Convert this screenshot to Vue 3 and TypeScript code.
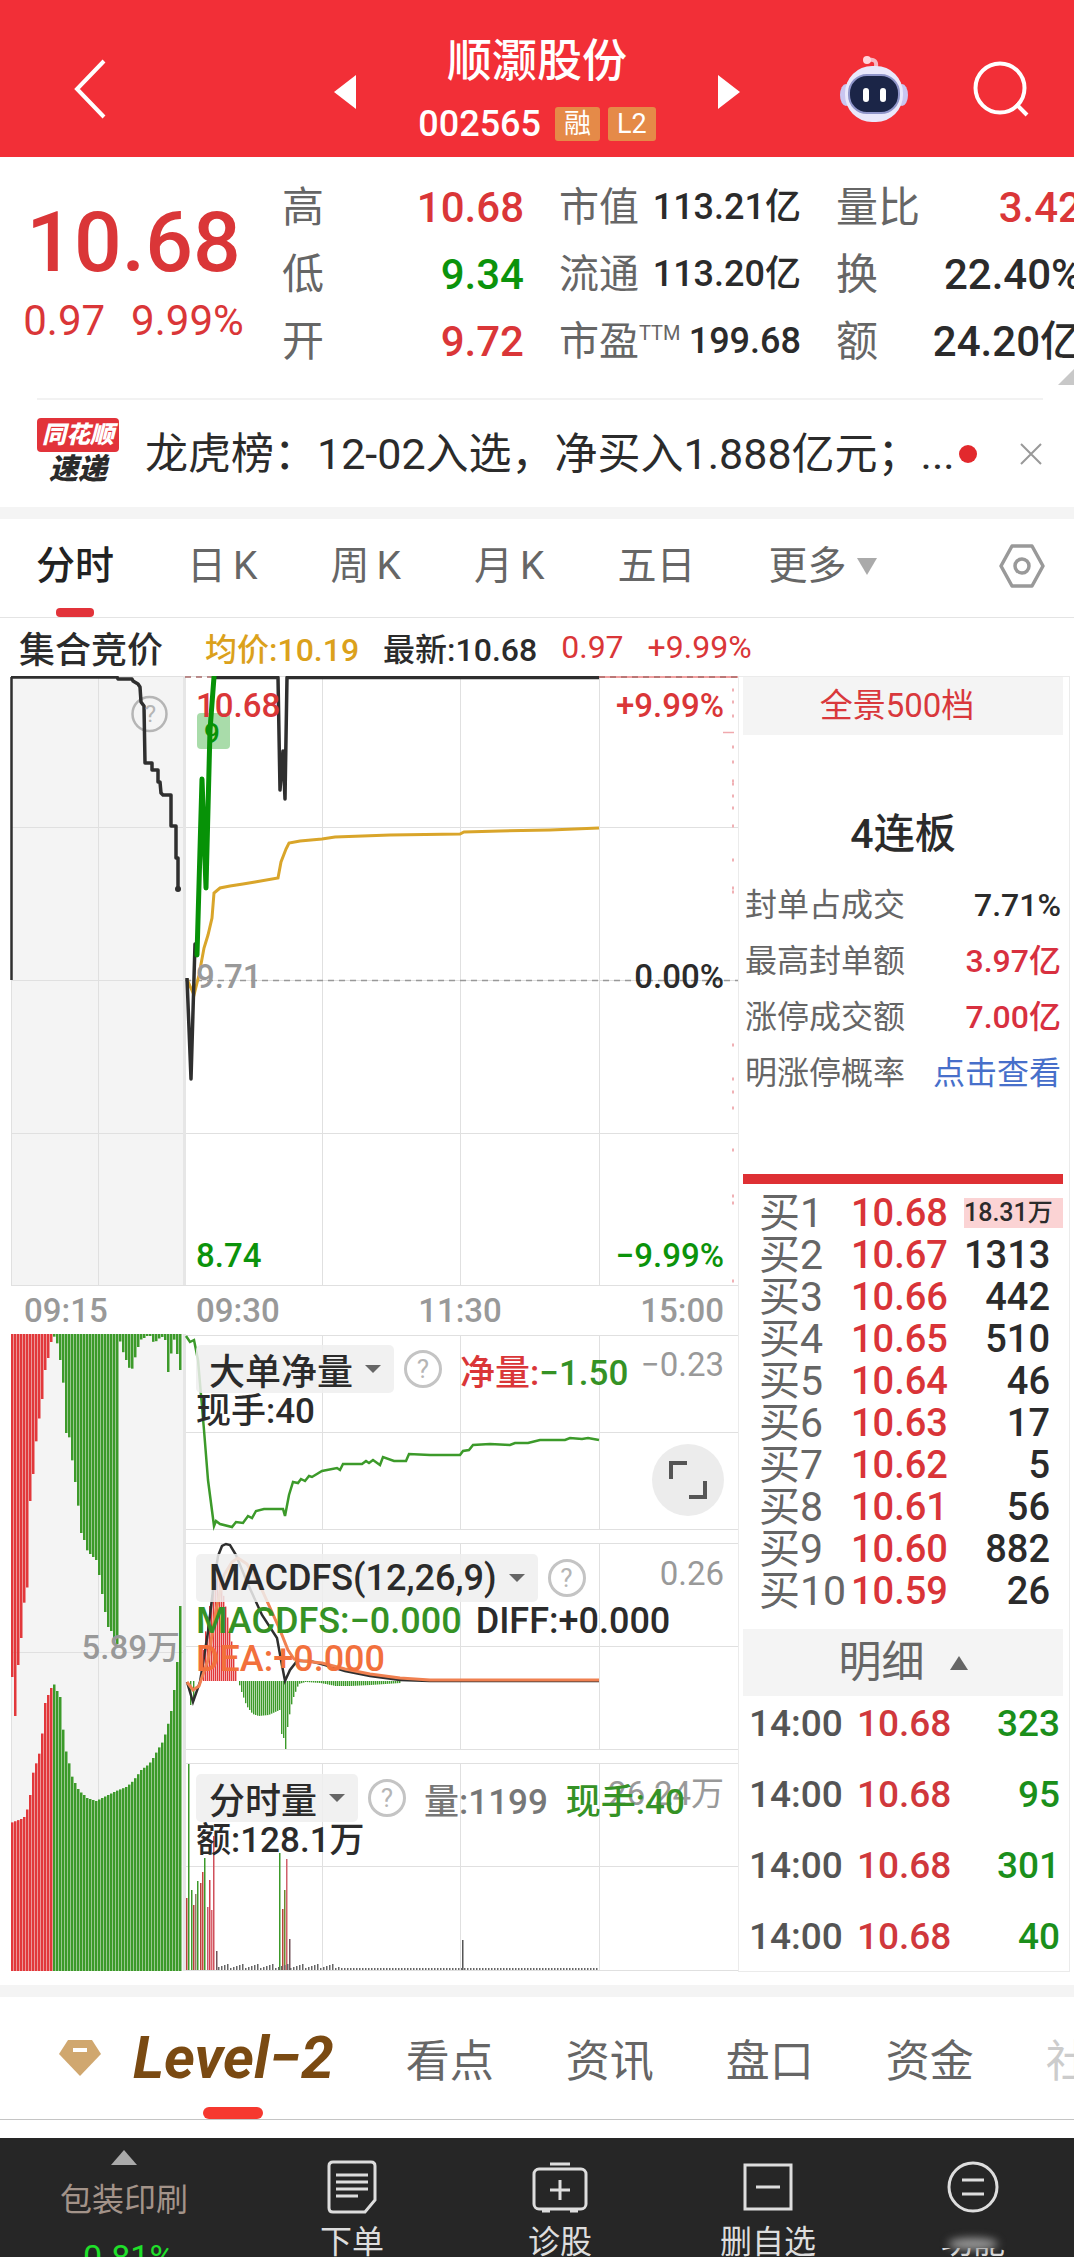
<script setup lang="ts">
import { ref } from 'vue'

type Pt = [number, number]
interface Bar { x: number; y: number; h: number; c: string }

const RED = '#e2383b'
const GREEN = '#3c9a2a'

const stats = [
  [
    { k: '高', v: '10.68', c: 'up' },
    { k: '低', v: '9.34', c: 'down' },
    { k: '开', v: '9.72', c: 'up' },
  ],
  [
    { k: '市值', v: '113.21亿', c: '' },
    { k: '流通', v: '113.20亿', c: '' },
    { k: '市盈', sup: 'TTM', v: '199.68', c: '' },
  ],
  [
    { k: '量比', v: '3.42', c: 'up' },
    { k: '换', v: '22.40%', c: '' },
    { k: '额', v: '24.20亿', c: '' },
  ],
]

const periods = [['分时', ''], ['日', 'K'], ['周', 'K'], ['月', 'K'], ['五日', '']]
const period = ref(0)

const limitInfo = [
  { k: '封单占成交', v: '7.71%', c: '' },
  { k: '最高封单额', v: '3.97亿', c: 'crimson' },
  { k: '涨停成交额', v: '7.00亿', c: 'crimson' },
]

const bids = [
  ['10.68', '18.31万'], ['10.67', '1313'], ['10.66', '442'], ['10.65', '510'], ['10.64', '46'],
  ['10.63', '17'], ['10.62', '5'], ['10.61', '56'], ['10.60', '882'], ['10.59', '26'],
]
const ticks = ['323', '95', '301', '40']
const sections = ['看点', '资讯', '盘口', '资金']

function at(points: Pt[], x: number): number {
  for (let i = 1; i < points.length; i++) {
    const [x0, y0] = points[i - 1]
    const [x1, y1] = points[i]
    if (x <= x1) return y0 + ((y1 - y0) * (x - x0)) / (x1 - x0)
  }
  return points[points.length - 1][1]
}

function line(points: Pt[]): string {
  return points.map((p) => p.join(',')).join(' ')
}

// Auction order book: unmatched volume hangs from the top, matched volume stands on the base.
const hanging: Pt[] = [
  [11, 1677], [14, 1716], [17, 1665], [20, 1638], [22, 1606], [25, 1596], [27, 1579], [29, 1501], [32, 1474],
  [34, 1446], [37, 1432], [39, 1405], [42, 1396], [44, 1370], [47, 1358], [49, 1345], [52, 1336], [55, 1338],
  [58, 1354], [60, 1366], [63, 1391], [65, 1433], [67, 1428], [70, 1456], [73, 1469], [75, 1495], [78, 1511],
  [80, 1533], [83, 1540], [85, 1549], [88, 1553], [95, 1560], [98, 1575], [101, 1594], [104, 1612], [107, 1627],
  [110, 1631], [115, 1644], [117, 1644], [118, 1336], [120, 1347], [125, 1360], [130, 1373], [133, 1360],
  [136, 1352], [139, 1337], [141, 1342], [144, 1336], [149, 1336], [151, 1342], [156, 1341], [160, 1336],
  [164, 1340], [167, 1372], [169, 1366], [171, 1341], [174, 1339], [176, 1354], [179, 1370],
]
const standing: Pt[] = [
  [12, 1822], [20, 1819], [23, 1817], [25, 1813], [27, 1806], [29, 1795], [31, 1777], [34, 1764], [37, 1762],
  [40, 1737], [42, 1730], [44, 1703], [47, 1695], [50, 1688], [52, 1683], [54, 1686], [56, 1691], [59, 1697],
  [61, 1716], [64, 1757], [66, 1746], [69, 1772], [72, 1779], [75, 1785], [78, 1791], [82, 1794], [86, 1798],
  [95, 1801], [105, 1796], [115, 1791], [125, 1787], [130, 1783], [135, 1777], [140, 1770], [148, 1764],
  [152, 1758], [157, 1749], [162, 1741], [166, 1728], [170, 1711], [173, 1690], [175, 1674], [177, 1650], [179, 1606],
]
const auctionBars: Bar[] = []
for (let x = 11; x < 180; x += 3) {
  const c = x < 53 ? RED : GREEN
  auctionBars.push({ x, y: 1334, h: at(hanging, x) - 1334, c })
  const top = at(standing, x)
  auctionBars.push({ x, y: top, h: 1971 - top, c })
}

const auctionPrice: Pt[] = [
  [11, 677], [117, 677], [118, 679], [132, 679], [133, 681], [138, 684], [140, 687], [141, 702], [144, 706],
  [145, 763], [152, 763], [152, 770], [158, 770], [158, 782], [160, 782], [161, 793], [163, 795], [171, 795],
  [171, 826], [176, 826], [176, 858], [178, 858], [178, 889],
]
const average: Pt[] = [
  [187, 979], [190, 986], [194, 995], [199, 975], [204, 948], [208, 935], [212, 918], [214, 893], [220, 888],
  [230, 886], [243, 884], [255, 882], [278, 878], [281, 862], [286, 849], [289, 843], [300, 841], [322, 839],
  [335, 837], [390, 835], [460, 834], [464, 832], [500, 831], [550, 830], [599, 828],
]
const netFlow: Pt[] = [
  [186, 1336], [190, 1342], [194, 1340], [198, 1360], [204, 1430], [208, 1480], [214, 1526], [216, 1521],
  [220, 1524], [232, 1527], [236, 1522], [243, 1523], [248, 1516], [252, 1518], [256, 1511], [264, 1509],
  [283, 1509], [285, 1516], [289, 1495], [293, 1482], [298, 1483], [301, 1479], [305, 1481], [309, 1476],
  [312, 1477], [322, 1471], [337, 1468], [340, 1470], [343, 1464], [362, 1464], [366, 1461], [369, 1463],
  [373, 1460], [380, 1465], [383, 1457], [394, 1461], [406, 1461], [409, 1454], [430, 1455], [460, 1455],
  [463, 1451], [469, 1450], [473, 1445], [490, 1444], [510, 1445], [515, 1443], [528, 1443], [540, 1440],
  [565, 1440], [570, 1438], [582, 1439], [588, 1438], [599, 1440],
]
const diff: Pt[] = [
  [187, 1682], [193, 1702], [200, 1682], [208, 1632], [214, 1582], [218, 1556], [222, 1546], [226, 1544],
  [230, 1545], [236, 1555], [247, 1582], [262, 1615], [277, 1638], [281, 1660], [285, 1681], [290, 1670],
  [297, 1661], [310, 1661], [325, 1665], [345, 1671], [370, 1676], [400, 1680], [430, 1681], [599, 1681],
]
const dea: Pt[] = [
  [187, 1682], [193, 1690], [199, 1686], [208, 1660], [216, 1610], [224, 1575], [232, 1562], [238, 1558],
  [247, 1564], [262, 1590], [280, 1630], [288, 1650], [294, 1659], [303, 1661], [322, 1663], [345, 1669],
  [370, 1674], [400, 1678], [430, 1680], [599, 1680],
]

const macdUp: Pt[] = [[203, 1650], [206, 1622], [212, 1590], [217, 1572], [221, 1585], [226, 1612], [230, 1634], [234, 1664], [237, 1680]]
const macdDown: Pt[] = [
  [238, 1682], [241, 1692], [246, 1706], [252, 1714], [258, 1716], [268, 1715], [279, 1710], [281, 1734],
  [283, 1738], [285, 1749], [287, 1727], [290, 1708], [293, 1697], [298, 1684], [305, 1682], [320, 1683],
  [335, 1686], [350, 1686], [370, 1685], [400, 1683],
]
const macdBars: Bar[] = [
  { x: 190, y: 1681, h: 24, c: GREEN },
  { x: 193, y: 1681, h: 20, c: GREEN },
]
for (let x = 203; x < 237; x += 2) macdBars.push({ x, y: at(macdUp, x), h: 1681 - at(macdUp, x), c: RED })
for (let x = 239; x < 400; x += 2) macdBars.push({ x, y: 1681, h: at(macdDown, x) - 1681, c: GREEN })

const volumeTops: [number, number, string][] = [
  [186, 1898, '#b8433c'], [188, 1764, GREEN], [191, 1890, GREEN], [193, 1905, '#b8433c'], [195, 1894, '#8d8467'],
  [197, 1881, GREEN], [200, 1883, '#b8433c'], [202, 1872, '#c8453f'], [204, 1858, GREEN], [207, 1907, '#c8556f'],
  [209, 1880, '#d0404b'], [211, 1910, '#d8606b'], [213, 1836, '#d0505b'], [216, 1951, '#72535a'],
  [279, 1853, GREEN], [282, 1909, '#b8433c'], [284, 1890, '#6b8a30'], [286, 1859, '#d0606b'], [289, 1939, '#72535a'],
  [462, 1940, '#555'],
]
const volumeBars: Bar[] = volumeTops.map(([x, y, c]) => ({ x, y, h: 1970 - y, c }))
for (let x = 218; x < 599; x += 3) {
  const h = x < 340 ? 2 + ((x * 7) % 5) : 1 + ((x * 11) % 3)
  volumeBars.push({ x, y: 1970 - h, h, c: '#666' })
}
const depthMarks = [690, 702, 716, 747, 762, 781, 784, 796, 808, 826, 860, 888, 892, 1045, 1079, 1092, 1108, 1150, 1196, 1203, 1281]
const verticals = [322, 460, 599]
</script>

<template>
  <main class="page">
    <header class="top">
      <button class="back" aria-label="返回">
        <svg width="36" height="62" viewBox="0 0 36 62"><path d="M32 3 5 31l27 28" fill="none" stroke="#fff" stroke-width="4" /></svg>
      </button>
      <div class="titles">
        <button aria-label="上一只"><svg width="24" height="36" viewBox="0 0 24 36"><path d="M23 1v34L1 18z" fill="#fff" /></svg></button>
        <div class="name">
          <h1>顺灏股份</h1>
          <p><span>002565</span><b>融</b><b>L2</b></p>
        </div>
        <button aria-label="下一只"><svg width="24" height="36" viewBox="0 0 24 36"><path d="M1 1v34l22-17z" fill="#fff" /></svg></button>
      </div>
      <div class="tools">
        <button aria-label="智能助手">
          <svg width="68" height="68" viewBox="0 0 68 68">
            <path d="M36 12c1-6-2-8-7-7" fill="none" stroke="#f6b9c4" stroke-width="4" />
            <circle cx="27" cy="5" r="4" fill="#ffd5dc" />
            <ellipse cx="6" cy="40" rx="6" ry="11" fill="#c9c6f0" />
            <ellipse cx="62" cy="40" rx="6" ry="11" fill="#c9c6f0" />
            <rect x="5" y="11" width="58" height="56" rx="27" fill="#e9e8fb" />
            <rect x="9" y="20" width="50" height="38" rx="18" fill="#1b2547" stroke="#8f95c9" stroke-width="2" />
            <rect x="23" y="33" width="6" height="14" rx="3" fill="#fff" />
            <rect x="40" y="33" width="6" height="14" rx="3" fill="#fff" />
          </svg>
        </button>
        <button aria-label="搜索">
          <svg width="58" height="58" viewBox="0 0 58 58" fill="none" stroke="#fff" stroke-width="4"><circle cx="28" cy="28" r="24.500" /><path d="m44 44 11 11" /></svg>
        </button>
      </div>
    </header>

    <section class="quote">
      <div class="last">
        <strong>10.68</strong>
        <p><span>0.97</span><span>9.99%</span></p>
      </div>
      <dl v-for="(col, i) in stats" :key="i" :class="'col' + i">
        <div v-for="s in col" :key="s.k">
          <dt>{{ s.k }}<sup v-if="s.sup">{{ s.sup }}</sup></dt>
          <dd :class="s.c">{{ s.v }}</dd>
        </div>
      </dl>
      <i class="corner"></i>
    </section>

    <section class="news">
      <div class="brand"><span>同花顺</span><em>速递</em></div>
      <a href="#">龙虎榜：12-02入选，净买入1.888亿元；...</a>
      <i class="dot"></i>
      <button aria-label="关闭"><svg width="24" height="24" viewBox="0 0 24 24"><path d="m2 2 20 20M22 2 2 22" stroke="#999" stroke-width="2" /></svg></button>
    </section>

    <nav class="periods">
      <button v-for="(p, i) in periods" :key="i" :class="{ on: period === i }" @click="period = i">
        <span>{{ p[0] }}</span><span v-if="p[1]">{{ p[1] }}</span>
      </button>
      <button class="more"><span>更多</span><svg width="20" height="17" viewBox="0 0 20 17"><path d="M0 0h20L10 17z" fill="#aaa" /></svg></button>
      <button class="gear" aria-label="设置">
        <svg width="46" height="44" viewBox="0 0 46 44" fill="none" stroke="#999" stroke-width="3.500" stroke-linejoin="round"><path d="M13 2h20l11 20-11 20H13L2 22z" /><circle cx="23" cy="22" r="7" /></svg>
      </button>
    </nav>

    <p class="summary">
      <b>集合竞价</b><span class="gold">均价:10.19</span><span>最新:10.68</span><span class="up">0.97</span><span class="up">+9.99%</span>
    </p>

    <section class="board">
      <div class="charts">
        <svg class="plot" viewBox="0 676 738 1296" preserveAspectRatio="none">
          <rect x="11" y="676" width="173" height="609" fill="#f4f4f4" />
          <rect x="11" y="1334" width="173" height="637" fill="#f4f4f4" />
          <g stroke="#e0e0e0" stroke-width="1">
            <path v-for="y in [676, 827, 980, 1133, 1285]" :key="y" :d="`M11 ${y}.5H738`" />
            <path v-for="y in [1335, 1432, 1529, 1543, 1646, 1749, 1763, 1866, 1970]" :key="y" :d="`M184 ${y}.5H738`" />
            <path d="M11.500 676V1285M98.500 676V1285M98.500 1334V1971M11.500 1334V1971M11 1652.500H184" />
            <path v-for="x in verticals" :key="x" :d="`M${x}.5 676V1285M${x}.5 1335V1529M${x}.5 1543V1749M${x}.5 1763V1970`" />
          </g>
          <path d="M184.500 676V1285M184.500 1334V1971" stroke="#e6e6e6" stroke-width="3" />
          <path d="M185 980.500H738" stroke="#999" stroke-width="1.500" stroke-dasharray="6 5" />
          <path d="M599 677H738" stroke="#f0a0a0" stroke-width="2" />
          <path d="M185 677H214M599 677H738" stroke="#a86a68" stroke-width="1.500" stroke-dasharray="6 5" />
          <path d="M723 732.500H734" stroke="#f0a9ae" stroke-width="1.500" />
          <path v-for="y in depthMarks" :key="y" :d="`M732 ${y}h2`" stroke="#f0b0b4" stroke-width="3" />
          <rect x="197" y="713" width="33" height="36" rx="4" fill="#a9dcaa" />
          <g fill="none" stroke="#b5b5b5" stroke-width="2.500"><circle cx="149.500" cy="714" r="17" /></g>

          <path d="M11.500 677V980" stroke="#2f2f2f" stroke-width="2.500" />
          <polyline :points="line(auctionPrice)" fill="none" stroke="#2f2f2f" stroke-width="3.500" stroke-linejoin="round" />
          <circle cx="178" cy="889" r="3" fill="#2f2f2f" />
          <polyline :points="line(average)" fill="none" stroke="#d9a52a" stroke-width="3" />
          <path d="M187 978 191 1079 195 944 197 955M214 677.500H278L280 790 283 751 285 799 287 677.500H599" fill="none" stroke="#2f2f2f" stroke-width="3.500" stroke-linejoin="round" />
          <path d="M197 955 202 779 206 888 210 730 214 677" fill="none" stroke="#079207" stroke-width="5" stroke-linejoin="round" stroke-linecap="round" />

          <rect v-for="(b, i) in auctionBars" :key="'a' + i" :x="b.x" :y="b.y" width="2.500" :height="b.h" :fill="b.c" />
          <polyline :points="line(netFlow)" fill="none" stroke="#3c9a2a" stroke-width="2.500" />
          <rect v-for="(b, i) in macdBars" :key="'m' + i" :x="b.x" :y="b.y" width="1.400" :height="b.h" :fill="b.c" />
          <polyline :points="line(diff)" fill="none" stroke="#2f2f2f" stroke-width="2.500" />
          <polyline :points="line(dea)" fill="none" stroke="#f08050" stroke-width="3" />
          <rect v-for="(b, i) in volumeBars" :key="'v' + i" :x="b.x" :y="b.y" width="1.500" :height="b.h" :fill="b.c" />
        </svg>

        <div class="auction"><span class="help">?</span></div>
        <div class="main">
          <p><span class="up">10.68</span><span class="up">+9.99%</span></p>
          <span class="nine">9</span>
          <p class="mid"><span class="dim">9.71</span><span>0.00%</span></p>
          <p><span class="down">8.74</span><span class="down">−9.99%</span></p>
        </div>
        <div class="axis first"><span>09:15</span></div>
        <div class="axis"><span>09:30</span><span>11:30</span><span>15:00</span></div>

        <div class="peak">5.89万</div>
        <div class="panel">
          <div class="legend">
            <button class="pick">大单净量<i></i></button><span class="ask">?</span>
            <span><span class="up">净量:</span><span class="leaf">−1.50</span></span>
          </div>
          <p><span>现手:40</span></p>
          <span class="scale">−0.23</span>
          <button class="expand" aria-label="全屏">
            <svg width="40" height="40" viewBox="0 0 40 40" fill="none" stroke="#555" stroke-width="4"><path d="M3 19V3h16M37 21v16H21" /></svg>
          </button>
        </div>
        <div class="panel">
          <div class="legend">
            <button class="pick wide">MACDFS(12,26,9)<i></i></button><span class="ask">?</span>
          </div>
          <p class="wide"><span class="leaf">MACDFS:−0.000</span><span>DIFF:+0.000</span></p>
          <p class="wide"><span class="orange">DEA:+0.000</span></p>
          <span class="scale">0.26</span>
        </div>
        <div class="panel">
          <div class="legend">
            <button class="pick">分时量<i></i></button><span class="ask">?</span>
            <span class="grey">量:1199</span><span class="leaf front">现手:40</span>
          </div>
          <p><span>额:128.1万</span></p>
          <span class="scale">26.24万</span>
        </div>
      </div>

      <aside class="book">
        <button class="depth">全景500档</button>
        <div class="limit">
          <h2>4连板</h2>
          <dl>
            <div v-for="r in limitInfo" :key="r.k"><dt>{{ r.k }}</dt><dd :class="r.c">{{ r.v }}</dd></div>
            <div><dt>明涨停概率</dt><dd><a href="#">点击查看</a></dd></div>
          </dl>
        </div>
        <table class="bids">
          <tbody>
            <tr v-for="(b, i) in bids" :key="i">
              <th scope="row">买{{ i + 1 }}</th>
              <td>{{ b[0] }}</td>
              <td :class="{ flash: i === 0 }"><span>{{ b[1] }}</span></td>
            </tr>
          </tbody>
        </table>
        <button class="detail">明细<svg width="18" height="14" viewBox="0 0 18 14"><path d="M9 0l9 14H0z" fill="#666" /></svg></button>
        <table class="ticks">
          <tbody>
            <tr v-for="(t, i) in ticks" :key="i"><td>14:00</td><td>10.68</td><td>{{ t }}</td></tr>
          </tbody>
        </table>
      </aside>
    </section>

    <nav class="sections">
      <svg width="42" height="36" viewBox="0 0 42 36"><path d="M9 0h24l9 14-21 22L0 14z" fill="#d0a76f" /><path d="M14 10h14" stroke="#fff" stroke-width="4" /></svg>
      <a class="level" href="#">Level−2</a>
      <a v-for="s in sections" :key="s" href="#">{{ s }}</a>
      <a class="faded" href="#">社区</a>
    </nav>

    <footer class="bar">
      <button class="sector">
        <svg width="26" height="15" viewBox="0 0 26 15"><path d="M13 0l13 15H0z" fill="#aaa" /></svg>
        <span>包装印刷</span><em>-0.81%</em>
      </button>
      <button>
        <svg width="56" height="54" viewBox="0 0 56 54" fill="none" stroke="#ddd" stroke-width="3"><path d="M9 2h38q4 0 4 4v34L41 52H9q-4 0-4-4V6q0-4 4-4zM12 15h32M12 22h32M12 29h32M12 36h22" /></svg>
        <span>下单</span>
      </button>
      <button>
        <svg width="56" height="54" viewBox="0 0 56 54" fill="none" stroke="#ddd" stroke-width="3"><rect x="2" y="9" width="52" height="40" rx="5" /><path d="M18 4h20M28 20v20M18 30h20M10 51h8M38 51h8" /></svg>
        <span>诊股</span>
      </button>
      <button>
        <svg width="56" height="54" viewBox="0 0 56 54" fill="none" stroke="#ddd" stroke-width="3"><path d="M5 5h46v44H5zM16 27h24" /></svg>
        <span>删自选</span>
      </button>
      <button class="func">
        <svg width="56" height="54" viewBox="0 0 56 54" fill="none" stroke="#ddd" stroke-width="3"><circle cx="28" cy="27" r="24" /><path d="M17 20h22M17 34h22" /></svg>
        <span>功能</span>
      </button>
    </footer>
  </main>
</template>

<style>
body { background: #fff; }
</style>

<style scoped>
.page {
  font-family: Roboto, "Noto Sans CJK SC", sans-serif;
  font-weight: 500;
  color: #2b2b2b;
  overflow: hidden;
}
button { border: 0; padding: 0; background: none; font: inherit; color: inherit; cursor: pointer; }
p, h1, h2, dl, dd { margin: 0; }
a { color: inherit; text-decoration: none; }
svg { display: block; flex: none; }
i, em { font-style: normal; }
.up { color: #da3638; }
.down { color: #0b930b; }
.leaf { color: #359225; }
.gold { color: #dba11c; }
.orange { color: #f2703c; }
.grey { color: #777; }

.top { height: 157px; background: #f22f37; color: #fff; display: grid; grid-template-columns: 1fr 408px 1fr; }
.back { justify-self: start; margin-left: 72px; margin-top: 20px; }
.titles { display: flex; justify-content: space-between; align-items: center; padding-top: 26px; }
.name { text-align: center; }
h1 { font-size: 45px; line-height: 64px; font-weight: 500; }
.name p { display: flex; align-items: center; gap: 8px; font-size: 36px; line-height: 60px; }
.name p span { margin-right: 6px; }
.name b { font-size: 27px; line-height: 34px; height: 34px; padding: 0 9px; background: #e58a48; border-radius: 3px; font-weight: 400; }
.tools { display: flex; justify-content: flex-end; align-items: center; gap: 64px; padding: 20px 44px 0 0; }

.quote { position: relative; display: grid; grid-template-columns: 247fr 242fr 242fr 246fr; column-gap: 35px; margin-right: -8px; padding: 17px 0 23px; }
.last { color: #da3638; text-align: center; padding: 23px 0 0 20px; }
.last strong { display: block; font-size: 84px; line-height: 92px; font-weight: 500; }
.last p { display: flex; justify-content: center; gap: 26px; font-size: 42px; line-height: 64px; font-weight: 400; }
.quote dl > div { display: flex; justify-content: space-between; height: 67px; line-height: 67px; white-space: nowrap; }
.quote dt { font-size: 42px; color: #666; font-weight: 400; }
.quote dd { font-size: 42px; }
.quote .col1 dt { font-size: 40px; }
.quote .col1 dd { font-size: 36px; }
sup { font-size: 20px; line-height: 20px; vertical-align: 15px; }
.corner { position: absolute; right: 8px; bottom: 13px; border: 8px solid; border-color: transparent #c8c8c8 #c8c8c8 transparent; }

.news { display: flex; align-items: center; height: 107px; margin: 0 31px 0 37px; border-top: 2px solid #f2f2f2; }
.brand { width: 82px; flex: none; text-align: center; font-weight: 900; font-style: italic; padding-bottom: 4px; }
.brand span { display: block; background: #e2333a; color: #fff; font-size: 24px; line-height: 34px; border-radius: 4px; }
.brand em { display: block; font-size: 29px; line-height: 34px; font-style: italic; }
.news a { font-size: 43px; line-height: 60px; margin-left: 26px; font-weight: 400; white-space: nowrap; }
.dot { width: 18px; height: 18px; border-radius: 50%; background: #e2292d; flex: none; margin-left: 4px; }
.news button { margin-left: auto; }

.periods { display: flex; align-items: center; gap: 73px; height: 98px; border-top: 12px solid #f4f4f4; border-bottom: 1px solid #e4e4e4; padding: 0 29px 0 36px; font-size: 39px; line-height: 50px; color: #666; font-weight: 400; }
.periods button { position: relative; display: flex; align-items: center; gap: 7px; height: 98px; padding-bottom: 4px; box-sizing: border-box; }
.periods .on { color: #222; font-weight: 500; }
.periods .on::after { content: ""; position: absolute; bottom: 0; left: 50%; width: 38px; height: 9px; margin-left: -19px; border-radius: 4px; background: #e2333a; }
.periods .more { gap: 10px; }
.periods .gear { margin-left: auto; }

.summary { display: flex; align-items: center; gap: 24px; height: 58px; padding-left: 19px; font-size: 32px; }
.summary b { font-size: 36px; font-weight: 500; margin-right: 18px; }
.summary .up { font-weight: 400; }

.board { display: grid; grid-template-columns: 738fr 336fr; }
.charts { position: relative; display: grid; grid-template-columns: 184fr 554fr; grid-template-rows: 609px 49px 209px 220px 209px; }
.plot { position: absolute; inset: 0; width: 100%; height: 100%; }
.charts > div { position: relative; }
.auction { text-align: right; padding: 18px 28px 0 0; color: #b5b5b5; font-size: 24px; line-height: 40px; font-weight: 400; }
.main { display: flex; flex-direction: column; justify-content: space-between; padding: 10px 14px 9px 12px; font-size: 33px; line-height: 40px; }
.main p { display: flex; justify-content: space-between; }
.main .mid { padding-bottom: 8px; }
.nine { position: absolute; left: 20px; top: 38px; color: #079207; font-size: 28px; }
.dim { color: #999; }
.axis { display: flex; justify-content: space-between; padding: 0 14px 0 12px; font-size: 33px; line-height: 52px; color: #999; }
.axis.first { padding-left: 24px; }
.peak { grid-row: 3 / 6; padding: 294px 4px 0 0; text-align: right; font-size: 33px; line-height: 40px; color: #999; }
.panel { padding: 11px 14px 0 12px; font-size: 35px; white-space: nowrap; }
.panel p { display: flex; gap: 14px; line-height: 38px; }
.panel .wide { font-size: 36px; }
.legend { display: flex; align-items: center; height: 48px; }
.pick { display: flex; align-items: center; gap: 12px; height: 48px; padding: 0 13px; background: #efefefd9; border-radius: 5px; font-size: 36px; }
.pick i { border: 8px solid transparent; border-top-color: #666; border-bottom: 0; }
.ask { width: 32px; height: 32px; margin: 0 18px 0 10px; border: 3px solid #c4c4c4; border-radius: 50%; color: #b5b5b5; font-size: 26px; line-height: 32px; text-align: center; font-weight: 400; }
.front { position: relative; z-index: 1; margin-left: 18px; }
.scale { position: absolute; right: 14px; top: 8px; font-size: 33px; line-height: 46px; color: #999; font-weight: 400; }
.expand { position: absolute; right: 14px; top: 110px; width: 72px; height: 72px; border-radius: 50%; background: #ececec; display: grid; place-items: center; }

.book { border: 1px solid #ebebeb; margin-right: 4px; padding: 0 6px 0 4px; }
.depth { width: 100%; height: 58px; padding-right: 12px; background: #f4f4f4; color: #d9383c; font-size: 33px; line-height: 58px; font-weight: 400; }
.limit { height: 439px; border-bottom: 10px solid #de3034; }
h2 { padding-top: 66px; text-align: center; font-size: 41px; line-height: 66px; font-weight: 500; }
.limit dl { padding-top: 10px; }
.limit dl div { display: flex; justify-content: space-between; padding: 0 2px; font-size: 32px; line-height: 56px; }
.limit dt { color: #666; font-weight: 400; font-size: 32px; }
.limit dd { font-size: 32px; }
.limit a { font-size: 32px; color: #476fca; font-weight: 400; }
.crimson { color: #d8303f; }
table { width: 100%; border-collapse: collapse; table-layout: fixed; }
th, td { padding: 0; text-align: left; white-space: nowrap; }
.bids { margin: 8px 0 17px; }
.bids tr { height: 42px; font-size: 38px; line-height: 42px; }
.bids th { width: 108px; padding-left: 16px; font-size: 41px; font-weight: 400; color: #666; box-sizing: border-box; }
.bids td:nth-child(2) { color: #d93438; }
.bids td:last-child { width: 99px; padding-right: 13px; text-align: right; box-sizing: border-box; }
.bids .flash { font-size: 25px; background: linear-gradient(#fbd3d4, #fbd3d4) center / 100% 30px no-repeat; }
.detail { width: 100%; height: 67px; background: #f4f4f4; color: #666; font-size: 43px; line-height: 67px; display: flex; align-items: center; justify-content: center; gap: 25px; font-weight: 400; }
.ticks tr { height: 71px; font-size: 37px; line-height: 56px; vertical-align: top; }
.ticks tr:last-child { height: 61px; }
.ticks td { color: #555; padding-left: 6px; }
.ticks td:first-child { width: 102px; }
.ticks td:nth-child(2) { color: #d0383c; }
.ticks td:last-child { color: #1b8f1b; text-align: right; padding-right: 3px; width: 90px; }

.sections { display: flex; align-items: center; gap: 72px; height: 122px; margin-top: 13px; border-top: 12px solid #f4f4f4; border-bottom: 1px solid #c4c4c4; padding-left: 59px; font-size: 44px; color: #666; font-weight: 400; white-space: nowrap; }
.sections svg { margin-right: -40px; }
.level { position: relative; line-height: 122px; font-size: 59px; font-weight: 700; font-style: italic; color: #7a4a12; }
.level::after { content: ""; position: absolute; bottom: 0; left: 50%; margin-left: -30px; width: 60px; height: 12px; border-radius: 6px; background: #f6382f; }
.faded { color: #ccc; }

.bar { display: grid; grid-template-columns: 248fr 208fr 208fr 208fr 202fr; height: 119px; margin-top: 18px; background: #262626; color: #ddd; overflow: hidden; font-size: 32px; line-height: 44px; font-weight: 400; }
.bar button { display: flex; flex-direction: column; align-items: center; padding-top: 22px; gap: 6px; height: 140px; }
.bar .sector { color: #a39389; gap: 13px; padding-top: 12px; }
.sector em { color: #1fe02a; font-size: 34px; }
.bar .func { position: relative; }
.func::before, .func::after { content: ""; position: absolute; left: 50%; z-index: 1; }
.func::before { top: 78px; width: 100px; height: 32px; margin-left: -50px; background: #262626; }
.func::after { top: 100px; width: 50px; height: 12px; margin-left: -25px; border-radius: 50%; background: #999; filter: blur(4px); }
</style>
